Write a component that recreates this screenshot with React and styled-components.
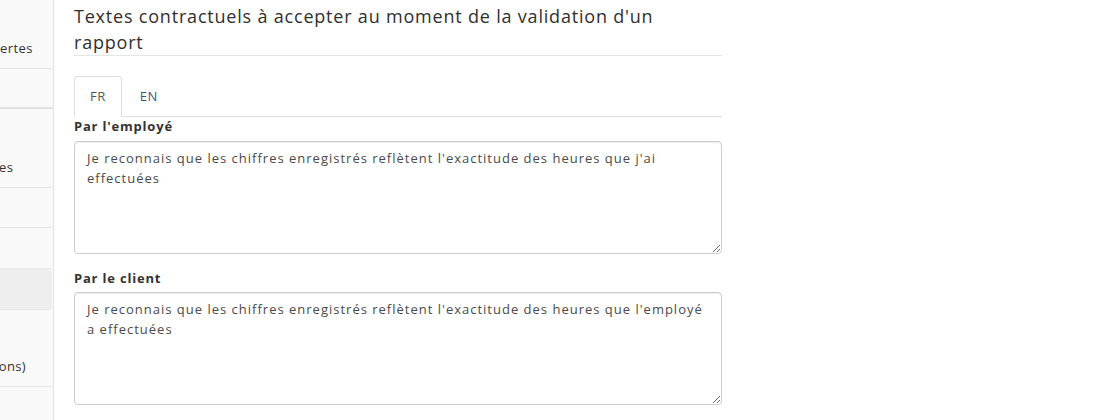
import React from "react";
import styled, { createGlobalStyle } from "styled-components";

const GlobalStyle = createGlobalStyle`
  html, body {
    margin: 0;
    padding: 0;
    background: #ffffff;
  }
  body {
    font-family: "Open Sans", "Noto Sans", "DejaVu Sans", sans-serif;
    font-size: 13px;
    line-height: 1.42857;
    color: #333333;
  }
  * { box-sizing: border-box; }
`;

const Page = styled.div`
  display: flex;
  height: 420px;
  overflow: hidden;
`;

const Sidebar = styled.nav`
  width: 54px;
  flex-shrink: 0;
  background: #f9f9f9;
  border-right: 1px solid #e3e3e3;
  display: flex;
  flex-direction: column;
  overflow: hidden;
`;

const SideItem = styled.div`
  height: ${(p) => p.$h}px;
  flex-shrink: 0;
  margin-right: 1px;
  display: flex;
  align-items: flex-end;
  padding-bottom: 10px;
  border-bottom: 1px solid #e5e5e5;
  background: ${(p) => (p.$active ? "#eeeeee" : "transparent")};
  border-radius: ${(p) => (p.$active ? "0 4px 4px 0" : "0")};
  white-space: nowrap;
  color: #333333;
  font-size: 13px;
  line-height: 18.57px;
  letter-spacing: 0.4px;
`;

const SideText = styled.span`
  margin-left: ${(p) => p.$shift || 0}px;
`;

const GroupDivider = styled.div`
  height: 1px;
  flex-shrink: 0;
  background: #e0e0e0;
`;

const Main = styled.main`
  padding: 4px 0 0 20px;
  width: 668px;
  flex-shrink: 0;
  display: flex;
  flex-direction: column;
`;

const Title = styled.h4`
  margin: 0;
  font-size: 18px;
  font-weight: 400;
  line-height: 25.7px;
  letter-spacing: 0.8px;
  color: #2f2f2f;
  border-bottom: 1px solid #e5e5e5;
`;

const Tabs = styled.ul`
  list-style: none;
  margin: 20px 0 0;
  padding: 0;
  display: flex;
  border-bottom: 1px solid #dddddd;
`;

const Tab = styled.li`
  margin-bottom: -1px;
  margin-right: 2px;
  padding: 10px 15px;
  line-height: 18.57px;
  font-size: 13px;
  letter-spacing: 0.5px;
  border: 1px solid ${(p) => (p.$active ? "#dddddd" : "transparent")};
  border-bottom-color: transparent;
  border-radius: 4px 4px 0 0;
  background: ${(p) => (p.$active ? "#ffffff" : "transparent")};
  color: ${(p) => (p.$active ? "#555555" : "#34597f")};
  cursor: pointer;
`;

const FieldGroup = styled.div`
  margin-bottom: 15px;
  display: flex;
  flex-direction: column;
`;

const Label = styled.label`
  display: block;
  font-weight: 700;
  margin-bottom: 5px;
  color: #333333;
  line-height: 18.57px;
  letter-spacing: 0.8px;
`;

const TextArea = styled.textarea`
  display: block;
  width: 100%;
  height: 113px;
  padding: 6px 12px;
  font-family: inherit;
  font-size: 13px;
  line-height: 20px;
  letter-spacing: 1px;
  color: #4a4a4a;
  background: #ffffff;
  border: 1px solid #cccccc;
  border-radius: 4px;
  box-shadow: inset 0 1px 1px rgba(0, 0, 0, 0.075);
  resize: vertical;
  outline: none;
`;

const sideItems = [
  { h: 69, text: "ertes", shift: 0 },
  { h: 39 },
  { divider: true },
  { h: 79, text: "es", shift: -1 },
  { h: 40 },
  { h: 41 },
  { h: 41, active: true },
  { h: 77, text: "ions)", shift: -5 },
  { h: 40 },
];

export default function App() {
  return (
    <>
      <GlobalStyle />
      <Page>
        <Sidebar>
          {sideItems.map((it, i) =>
            it.divider ? (
              <GroupDivider key={i} />
            ) : (
              <SideItem key={i} $h={it.h} $active={it.active}>
                {it.text && <SideText $shift={it.shift}>{it.text}</SideText>}
              </SideItem>
            )
          )}
        </Sidebar>
        <Main>
          <Title>
            Textes contractuels à accepter au moment de la validation d'un rapport
          </Title>
          <Tabs>
            <Tab $active>FR</Tab>
            <Tab>EN</Tab>
          </Tabs>
          <FieldGroup>
            <Label>Par l'employé</Label>
            <TextArea
              defaultValue="Je reconnais que les chiffres enregistrés reflètent l'exactitude des heures que j'ai effectuées"
            />
          </FieldGroup>
          <FieldGroup>
            <Label>Par le client</Label>
            <TextArea
              defaultValue="Je reconnais que les chiffres enregistrés reflètent l'exactitude des heures que l'employé a effectuées"
            />
          </FieldGroup>
        </Main>
      </Page>
    </>
  );
}
